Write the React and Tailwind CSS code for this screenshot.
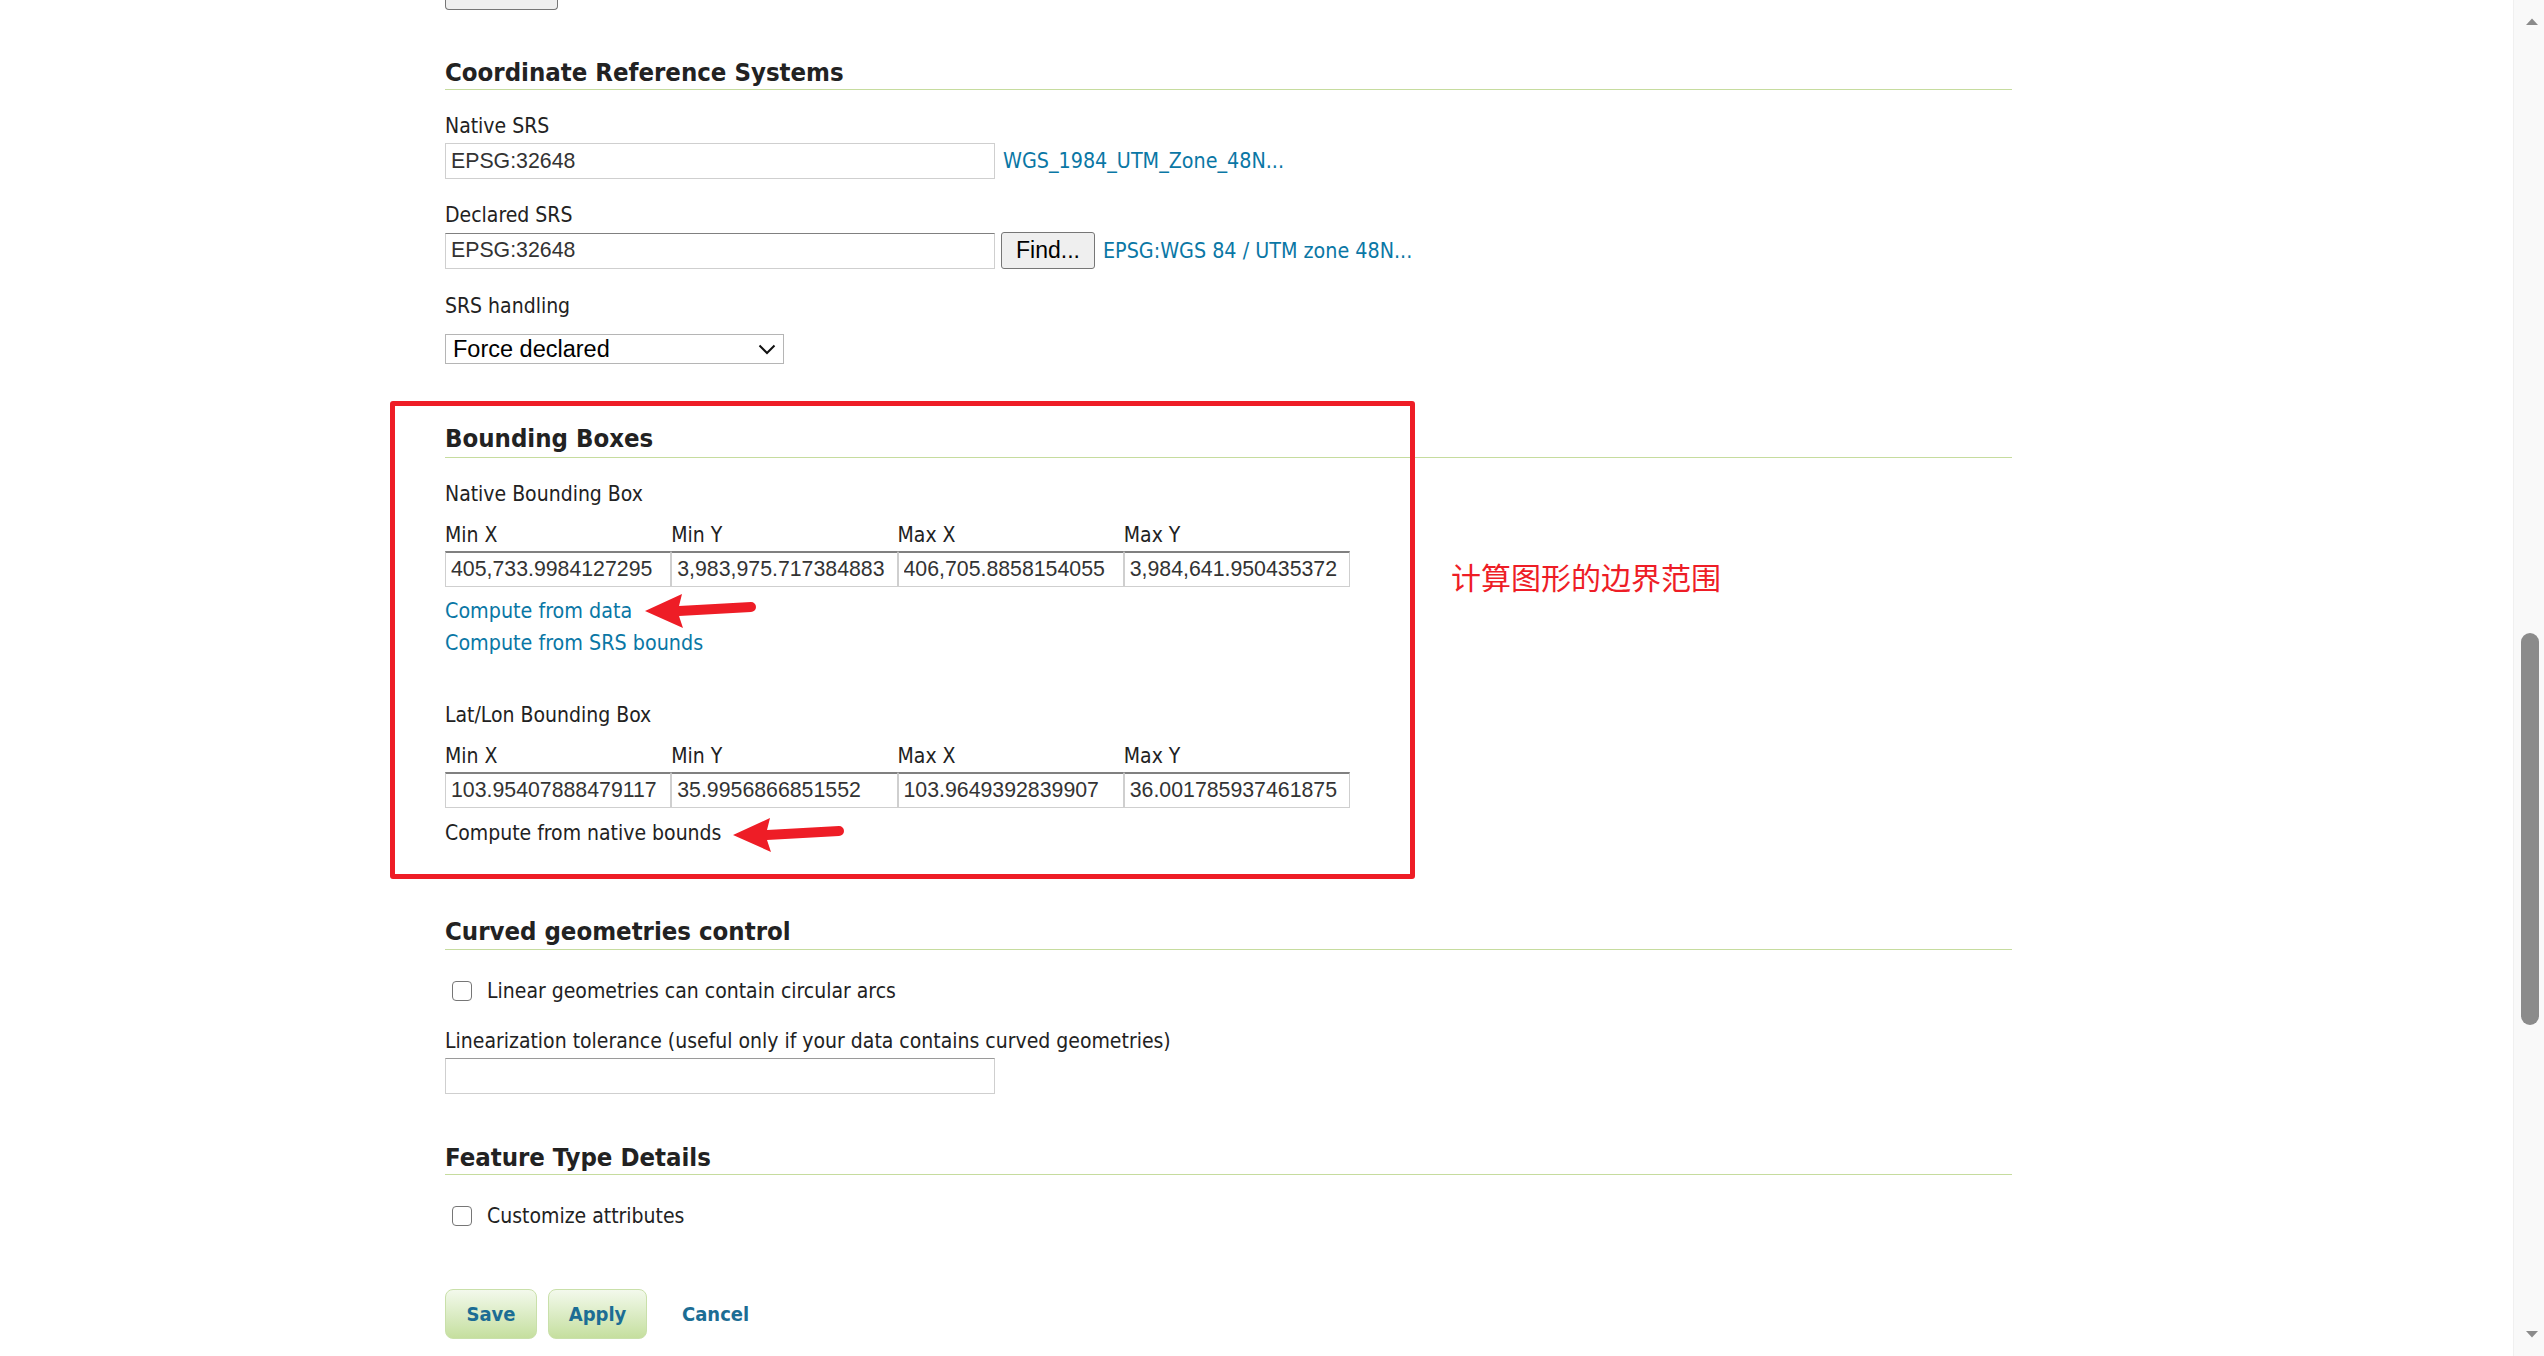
import React from 'react';

const label = "font-['DejaVu_Sans_Condensed','Liberation_Sans',sans-serif] text-[21px] leading-[24px] text-[#222]";
const heading = "font-['DejaVu_Sans_Condensed','Liberation_Sans',sans-serif] font-bold text-[25.5px] leading-[30px] text-[#222] border-b border-[#c6dc9e]";
const link = "font-['DejaVu_Sans_Condensed','Liberation_Sans',sans-serif] text-[21.3px] leading-[32px] text-[#0a77a5]";
const field = "block h-[36px] px-[5px] bg-white font-['Liberation_Sans',Arial,sans-serif] text-[21.3px] text-[#333] border border-[#cfcfcf] outline-none";
const greenBtn = "h-[50px] rounded-[8px] border border-[#c9e0aa] bg-gradient-to-b from-[#f3f9ec] to-[#c5df9e] font-['DejaVu_Sans_Condensed','Liberation_Sans',sans-serif] font-bold text-[20px] text-[#1c6d94]";

const Arrow = ({ className }) => (
  <svg className={className} width="112" height="40" viewBox="0 0 112 40">
    <path d="M0,20 L37,3 L34,15 L106,11 A5,5 0 0 1 106,21 L34,25 L38,37 Z" fill="#ee1d26" />
  </svg>
);

const Checkbox = ({ text }) => (
  <div className="flex items-center h-[24px]">
    <span className="ml-[7px] w-[20px] h-[20px] rounded-[4px] border-[1.5px] border-[#767676] bg-white" />
    <span className={label + ' ml-[15px]'}>{text}</span>
  </div>
);

const BoxGrid = ({ values }) => (
  <div>
    <div className="grid grid-cols-4 w-[905px]">
      {['Min X', 'Min Y', 'Max X', 'Max Y'].map(t => (
        <div key={t} className={label}>{t}</div>
      ))}
    </div>
    <div className="grid grid-cols-4 w-[905px] mt-[4px]">
      {values.map(v => (
        <input
          key={v}
          readOnly
          defaultValue={v}
          className={field + ' w-full h-[35px] border-t-[#808080] border-t-2'}
        />
      ))}
    </div>
  </div>
);

export default function App() {
  return (
    <div className="flex w-full h-screen overflow-hidden bg-white">
      <div className="relative flex-1 pl-[445px]">
        <div className="w-[113px] h-[10px] border border-t-0 border-[#767676] rounded-b-[4px] bg-[#efefef]" />

        <div className="w-[1567px]">
          {/* Coordinate Reference Systems */}
          <h3 className={heading + ' mt-[47px] pb-[2px]'}>Coordinate Reference Systems</h3>
          <div className={label + ' mt-[24px]'}>Native SRS</div>
          <div className="flex items-center mt-[5px]">
            <input readOnly defaultValue="EPSG:32648" className={field + ' w-[550px]'} />
            <span className={link + ' ml-[8px]'}>WGS_1984_UTM_Zone_48N...</span>
          </div>
          <div className={label + ' mt-[24px]'}>Declared SRS</div>
          <div className="flex items-center mt-[5px]">
            <input readOnly defaultValue="EPSG:32648" className={field + ' w-[550px] border-t-[#808080]'} />
            <button className="ml-[6px] w-[94px] h-[37px] rounded-[3px] border border-[#767676] bg-[#efefef] font-['Liberation_Sans',Arial,sans-serif] text-[23px] text-black">
              Find...
            </button>
            <span className={link + ' ml-[8px]'}>EPSG:WGS 84 / UTM zone 48N...</span>
          </div>
          <div className={label + ' mt-[25px]'}>SRS handling</div>
          <div className="mt-[16px] w-[339px] h-[30px] flex items-center justify-between pl-[7px] pr-[7px] border border-[#b5b5b5] bg-white">
            <span className="font-['Liberation_Sans',Arial,sans-serif] text-[23.5px] leading-[28px] text-black">Force declared</span>
            <svg width="18" height="11" viewBox="0 0 18 11">
              <path d="M1.5,1.5 L9,9 L16.5,1.5" fill="none" stroke="#111" strokeWidth="2" />
            </svg>
          </div>

          {/* Bounding Boxes */}
          <h3 className={heading + ' mt-[59px] pb-[4px]'}>Bounding Boxes</h3>
          <div className={label + ' mt-[24px]'}>Native Bounding Box</div>
          <div className="mt-[17px]">
            <BoxGrid values={['405,733.9984127295', '3,983,975.717384883', '406,705.8858154055', '3,984,641.950435372']} />
          </div>
          <div className="mt-[8px]">
            <div className={link}>Compute from data</div>
            <div className={link}>Compute from SRS bounds</div>
          </div>
          <div className={label + ' mt-[44px]'}>Lat/Lon Bounding Box</div>
          <div className="mt-[17px]">
            <BoxGrid values={['103.95407888479117', '35.9956866851552', '103.9649392839907', '36.001785937461875']} />
          </div>
          <div className={label + ' mt-[13px]'}>Compute from native bounds</div>

          {/* Curved geometries control */}
          <h3 className={heading + ' mt-[71px] pb-[3px]'}>Curved geometries control</h3>
          <div className="mt-[29px]">
            <Checkbox text="Linear geometries can contain circular arcs" />
          </div>
          <div className={label + ' mt-[26px]'}>Linearization tolerance (useful only if your data contains curved geometries)</div>
          <input readOnly defaultValue="" className={field + ' mt-[5px] w-[550px] h-[35px] border-t-[#9a9a9a]'} />

          {/* Feature Type Details */}
          <h3 className={heading + ' mt-[48px] pb-[2px]'}>Feature Type Details</h3>
          <div className="mt-[29px]">
            <Checkbox text="Customize attributes" />
          </div>

          <div className="mt-[61px] flex items-center">
            <button className={greenBtn + ' w-[92px]'}>Save</button>
            <button className={greenBtn + ' ml-[11px] w-[99px]'}>Apply</button>
            <span className="ml-[35px] font-['DejaVu_Sans_Condensed','Liberation_Sans',sans-serif] font-bold text-[20px] text-[#1c6d94]">
              Cancel
            </span>
          </div>
        </div>

        {/* annotation overlay */}
        <div className="absolute left-[390px] top-[401px] w-[1025px] h-[478px] border-[5px] border-[#ee1d26] rounded-[3px]" />
        <Arrow className="absolute left-[645px] top-[591px]" />
        <Arrow className="absolute left-[733px] top-[815px]" />
        <div className="absolute left-[1451px] top-[557px] font-['Noto_Sans_CJK_SC',sans-serif] text-[30px] leading-[38px] text-[#ee1d26]">
          计算图形的边界范围
        </div>
      </div>

      {/* scrollbar */}
      <div className="relative w-[31px] h-screen bg-[#f9f9f9] border-l border-[#f0f0f0]">
        <svg className="absolute left-[11px] top-[17px]" width="14" height="9" viewBox="0 0 14 9">
          <path d="M1,8 L7,1.5 L13,8 Z" fill="#8b8b8b" />
        </svg>
        <div className="absolute left-[7px] top-[633px] w-[18px] h-[392px] rounded-full bg-[#8b8b8b]" />
        <svg className="absolute left-[11px] bottom-[17px]" width="14" height="9" viewBox="0 0 14 9">
          <path d="M1,1 L7,7.5 L13,1 Z" fill="#8b8b8b" />
        </svg>
      </div>
    </div>
  );
}
